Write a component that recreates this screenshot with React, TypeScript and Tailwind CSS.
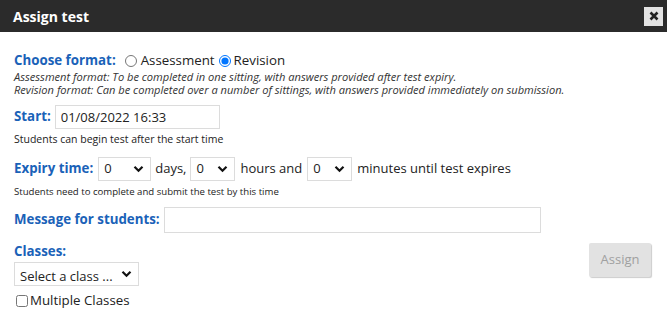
import React from "react";

const font = { fontFamily: '"Open Sans", "Liberation Sans", sans-serif' };

const Chevron = () => (
  <svg width="11" height="8" viewBox="0 0 11 8" className="pointer-events-none absolute right-[6px] top-1/2 -translate-y-1/2">
    <path d="M1.5 1.8 L5.5 5.8 L9.5 1.8" fill="none" stroke="#111" strokeWidth="2.2" />
  </svg>
);

const NumSelect = ({ w }: { w: string }) => (
  <div className={`relative h-[24px] ${w} border border-[#dcdcdc] bg-white`}>
    <select className="h-full w-full appearance-none bg-transparent pl-[5px] text-[13px] text-[#222] outline-none">
      <option>0</option>
    </select>
    <Chevron />
  </div>
);

export default function App() {
  return (
    <div className="h-[335px] w-[667px] bg-white text-[#222]" style={font}>
      {/* header */}
      <div className="flex h-[32px] items-center justify-between bg-[#2b2b2b] pl-[13px] pr-[4px]">
        <span className="text-[14px] font-bold text-white">Assign test</span>
        <button className="flex h-[19px] w-[19px] items-center justify-center bg-[#e3e3e3]">
          <svg width="10" height="10" viewBox="0 0 10 10">
            <path d="M1.5 1.5 L8.5 8.5 M8.5 1.5 L1.5 8.5" stroke="#222" strokeWidth="2.6" />
          </svg>
        </button>
      </div>

      <div className="px-[14px] pt-[20px]">
        {/* format */}
        <div className="flex h-[18px] items-center text-[13.3px]">
          <span className="mr-[9px] text-[13.3px] font-bold text-[#1a62b8]">Choose format:</span>
          <label className="flex items-center">
            <input type="radio" name="fmt" className="m-0 mr-[4px] h-[12px] w-[12px]" />
            Assessment
          </label>
          <label className="ml-[4px] flex items-center">
            <input type="radio" name="fmt" defaultChecked className="m-0 mr-[3px] h-[12px] w-[12px]" />
            Revision
          </label>
        </div>
        <div className="text-[11.1px] italic leading-[13px] text-[#333]">
          <p>Assessment format: To be completed in one sitting, with answers provided after test expiry.</p>
          <p>Revision format: Can be completed over a number of sittings, with answers provided immediately on submission.</p>
        </div>

        {/* start */}
        <div className="mt-[9px] flex items-start">
          <span className="mr-[4px] mt-[2px] text-[13.3px] font-bold text-[#1a62b8]">Start:</span>
          <input
            defaultValue="01/08/2022 16:33"
            className="h-[24px] w-[165px] border border-[#dcdcdc] px-[5px] text-[13px] text-[#222] outline-none"
          />
        </div>
        <div className="mt-[3px] text-[10.5px] leading-[14px]">Students can begin test after the start time</div>

        {/* expiry */}
        <div className="mt-[11px] flex items-center text-[13px]">
          <span className="mr-[5px] text-[13.3px] font-bold text-[#1a62b8]">Expiry time:</span>
          <NumSelect w="w-[53px]" />
          <span className="mx-[4px]">days,</span>
          <NumSelect w="w-[45px]" />
          <span className="mx-[5px]">hours and</span>
          <NumSelect w="w-[45px]" />
          <span className="ml-[5px]">minutes until test expires</span>
        </div>
        <div className="mt-[4px] text-[9.6px] leading-[14px]">Students need to complete and submit the test by this time</div>

        {/* message */}
        <div className="mt-[8px] flex items-center">
          <span className="mr-[4px] text-[13.3px] font-bold text-[#1a62b8]">Message for students:</span>
          <input className="h-[26px] w-[377px] border border-[#dcdcdc] px-[5px] text-[13px] outline-none" />
        </div>

        {/* classes + assign */}
        <div className="mt-[9px] flex items-start justify-between pr-[2px]">
          <div>
            <div className="text-[13.3px] font-bold leading-[18px] text-[#1a62b8]">Classes:</div>
            <div className="relative mt-[2px] h-[24px] w-[125px] border border-[#dcdcdc] bg-white">
              <select className="h-full w-full appearance-none bg-transparent pl-[5px] text-[13px] text-[#222] outline-none">
                <option>Select a class ...</option>
              </select>
              <Chevron />
            </div>
            <label className="mt-[5px] flex items-center text-[13.3px]">
              <input type="checkbox" className="m-0 ml-[2px] mr-[2px] h-[12px] w-[12px]" />
              Multiple Classes
            </label>
          </div>
          <button className="mt-[1px] h-[34px] w-[62px] rounded-[2px] bg-[#e2e2e2] text-[13px] text-[#a0a0a0] shadow-[1px_1px_1px_rgba(0,0,0,0.2)]">
            Assign
          </button>
        </div>
      </div>
    </div>
  );
}
